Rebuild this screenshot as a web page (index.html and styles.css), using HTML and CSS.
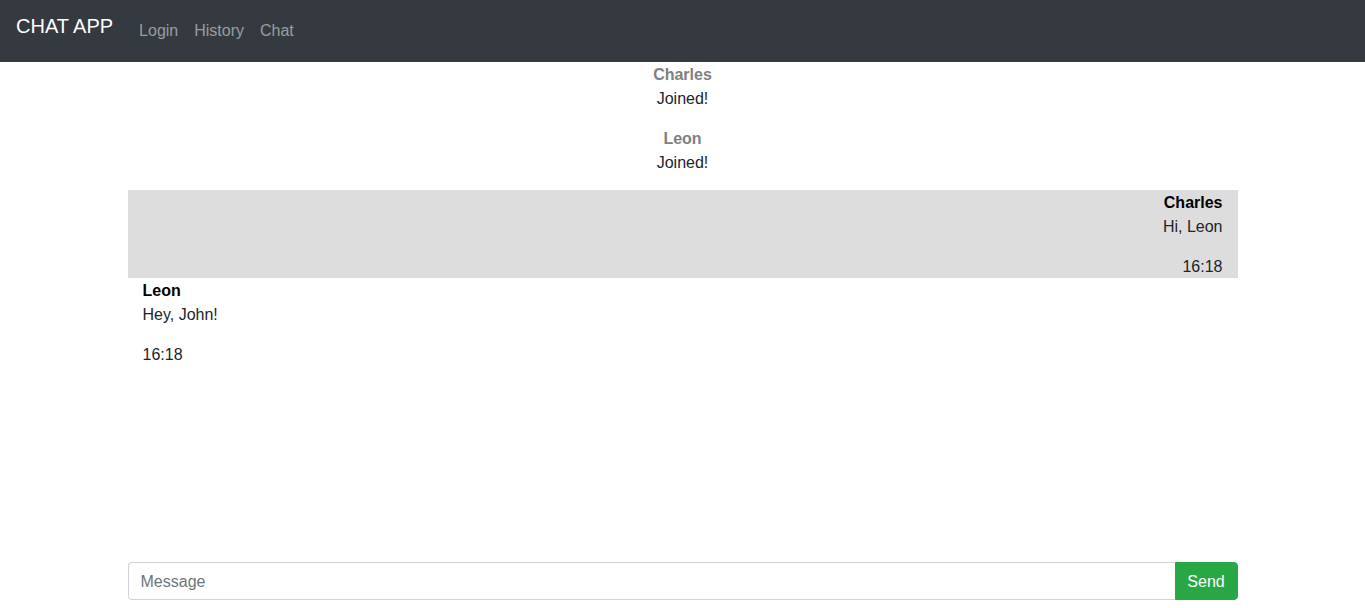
FILE: index.html
```html
<!DOCTYPE html>
<html lang="en">
<head>
<meta charset="utf-8">
<title>Chat App</title>
<link rel="stylesheet" href="styles.css">
</head>
<body>
<div class="page">
  <nav class="navbar">
    <a class="brand" href="#">CHAT APP</a>
    <ul class="nav">
      <li><a class="nav-link" href="#">Login</a></li>
      <li><a class="nav-link" href="#">History</a></li>
      <li><a class="nav-link" href="#">Chat</a></li>
    </ul>
  </nav>
  <main class="container">
    <div class="messages">
      <div class="system">
        <div class="line system-name">Charles</div>
        <div class="line">Joined!</div>
      </div>
      <div class="system">
        <div class="line system-name">Leon</div>
        <div class="line">Joined!</div>
      </div>
      <div class="message own">
        <div class="line author">Charles</div>
        <p class="line text">Hi, Leon</p>
        <div class="line time">16:18</div>
      </div>
      <div class="message">
        <div class="line author">Leon</div>
        <p class="line text">Hey, John!</p>
        <div class="line time">16:18</div>
      </div>
    </div>
    <form class="composer">
      <input class="input" type="text" placeholder="Message">
      <button class="send" type="button">Send</button>
    </form>
  </main>
</div>
</body>
</html>
```
FILE: styles.css
```css
* { box-sizing: border-box; }
html, body { margin: 0; padding: 0; }
body {
  font-family: "Liberation Sans", Arial, sans-serif;
  font-size: 16px;
  line-height: 1.5;
  color: #212529;
  background: #fff;
}
.page {
  height: 100vh;
  display: flex;
  flex-direction: column;
}
.navbar {
  height: 62px;
  flex: 0 0 62px;
  background: #343a40;
  display: flex;
  align-items: flex-start;
  padding: 0 16px;
}
.brand {
  color: #fff;
  font-size: 20px;
  line-height: 30px;
  padding-top: 11px;
  margin-right: 18px;
  text-decoration: none;
}
.nav {
  list-style: none;
  margin: 0;
  padding: 19px 0 0 0;
  display: flex;
}
.nav-link {
  display: block;
  padding: 0 8px;
  line-height: 24px;
  color: rgba(255, 255, 255, 0.5);
  text-decoration: none;
}
.container {
  width: 1110px;
  margin: 0 auto;
  flex: 1;
  display: flex;
  flex-direction: column;
}
.messages {
  flex: 1;
}
.line {
  padding-top: 1px;
  line-height: 23px;
}
.system {
  text-align: center;
  margin-bottom: 16px;
}
.system-name {
  font-weight: bold;
  color: #808080;
}
.message {
  padding: 0 15px;
}
.message.own {
  background: #dddddd;
  text-align: right;
}
.author {
  font-weight: bold;
  color: #000;
}
.text {
  margin: 0 0 16px 0;
}
.composer {
  display: flex;
  margin: 0 0 8px 0;
}
.input {
  flex: 1;
  height: 38px;
  padding: 7px 12px 5px 12px;
  font: inherit;
  color: #495057;
  border: 1px solid #ced4da;
  border-right: 0;
  border-radius: 4px 0 0 4px;
  outline: none;
}
.input::placeholder { color: #6c757d; }
.send {
  width: 63px;
  height: 38px;
  padding: 7px 0 5px 0;
  font: inherit;
  color: #fff;
  background: #28a745;
  border: 1px solid #28a745;
  border-radius: 0 4px 4px 0;
}
```
